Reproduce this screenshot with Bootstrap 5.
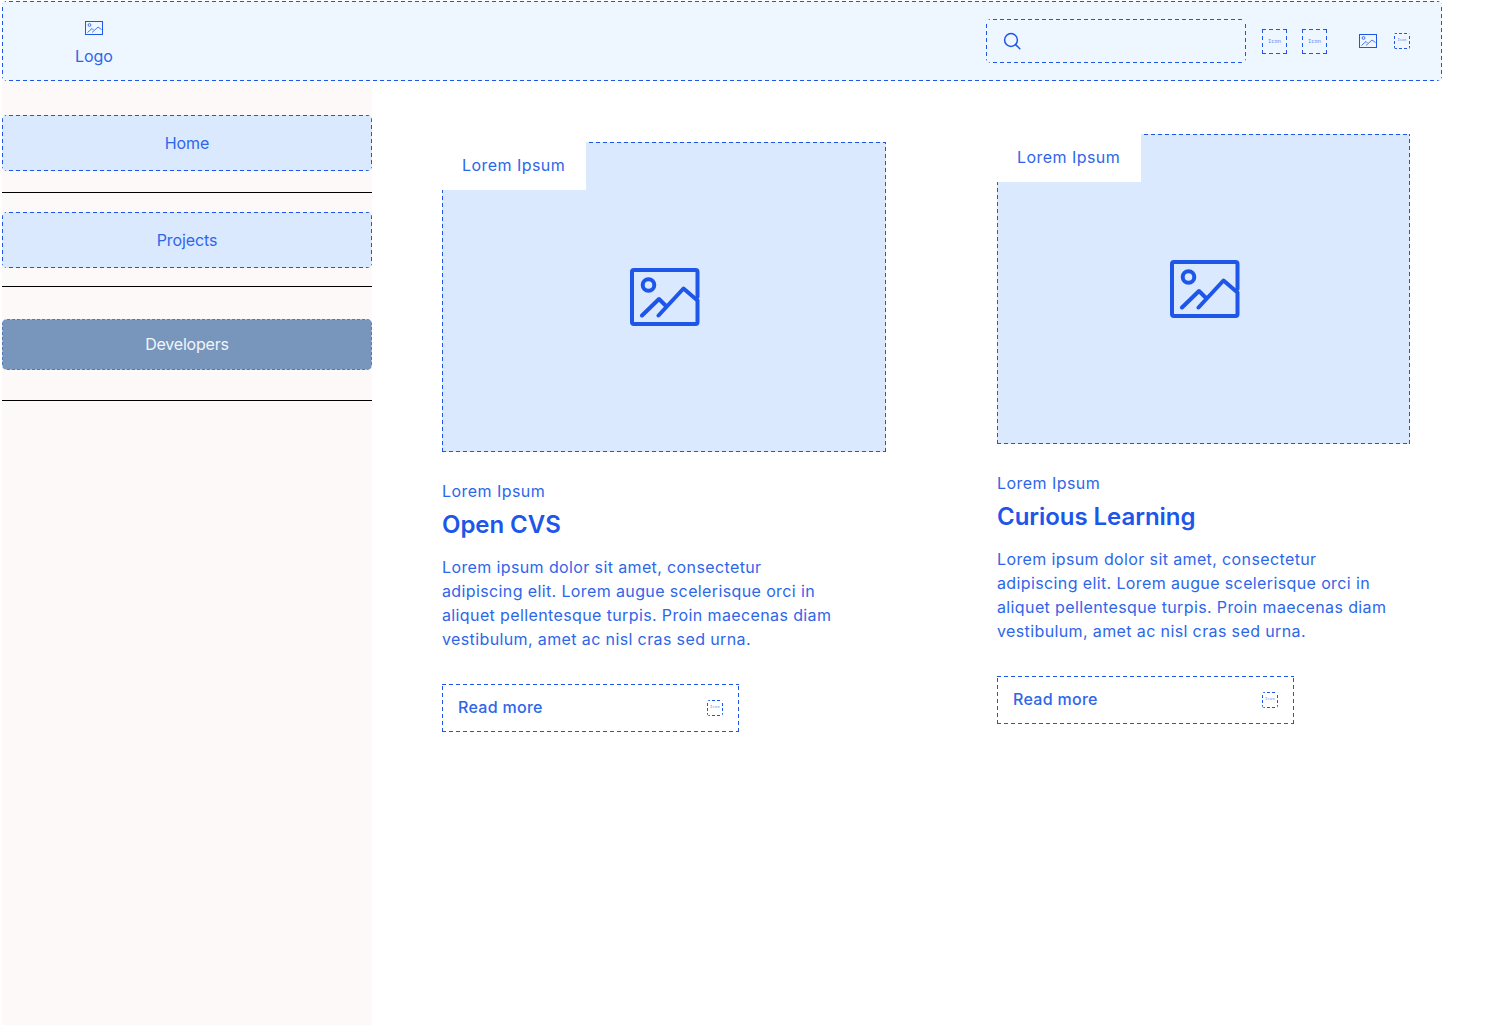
<!doctype html>
<html lang="en"><head><meta charset="utf-8"><title>Wireframe</title>
<link href="https://cdn.jsdelivr.net/npm/bootstrap@5.3.0/dist/css/bootstrap.min.css" rel="stylesheet">
<style>
html,body{background:#fff;height:100%}
body{font-family:"Inter","Liberation Sans",sans-serif;color:#1d56e8;overflow:hidden}
.shell{width:1495px;height:1025px;padding:1px 0 0 2px}
.dash{--dc:#1d56e8;--gap:transparent;--on:4px;--off:7px;
 background-image:
  repeating-linear-gradient(90deg,var(--dc) 0 var(--on),var(--gap) var(--on) var(--off)),
  repeating-linear-gradient(90deg,var(--dc) 0 var(--on),var(--gap) var(--on) var(--off)),
  repeating-linear-gradient(0deg,var(--dc) 0 var(--on),var(--gap) var(--on) var(--off)),
  repeating-linear-gradient(0deg,var(--dc) 0 var(--on),var(--gap) var(--on) var(--off));
 background-size:100% 1px,100% 1px,1px 100%,1px 100%;
 background-position:0 0,0 100%,0 0,100% 0;
 background-repeat:no-repeat}
.topbar{width:1440px;height:80px;background-color:#eef6ff;border-radius:5px;padding-right:32px}
.logo-box{width:184px;font-size:16px;color:#2e66ea;line-height:20px;padding-top:20px;letter-spacing:-.05px}
.logo-box svg{display:block;margin:0 auto 11px}
.search-box{width:260px;height:44px;border-radius:5px;padding-left:17px}
.ic-box{width:25px;height:25px;padding-top:1px;font-size:5.5px;color:#5b8bf0;font-family:"DejaVu Sans Mono",monospace;line-height:1;flex:none}
.ic-small{--on:3px;--off:5px;width:16px;height:16px;font-size:3.7px;color:#5b8bf0;font-family:"DejaVu Sans Mono",monospace;line-height:1;border-radius:2px;flex:none}
.below{height:944px}
.side{width:370px;background:#fdf9f8;flex:none}
.nav-tile{height:56px;background-color:#dbe9fe;border-radius:5px;color:#2e66ea;font-size:16px;letter-spacing:-.1px}
.nav-tile.on{--dc:#4f7cb8;--gap:#aebfd6;--on:3px;--off:5px;height:51px;background-color:#7896bb;color:#f1f5fb;letter-spacing:-.2px;margin-top:32px;padding-bottom:2px}
.rule{height:1px;background:#000}
.m-a{margin-top:34px}.m-b{margin-top:21px}.m-c{margin-top:19px}.m-d{margin-top:18px}.m-f{margin-top:30px}
.mainarea{padding-left:70px}
.tile{flex:none;font-family:"Inter","Liberation Sans",sans-serif}
.tile-a{width:444px;margin-top:61px}
.tile-b{width:413px;margin-top:53px;margin-left:111px}
.thumb{height:310px;background-color:#dbe9fe}
.thumb svg{margin-left:2px}
.tag{top:0;left:0;width:144px;height:48px;background:#fff;font-size:16px;color:#2e66ea;letter-spacing:.45px;padding:0 0 2px 20px}
.eyebrow{margin-top:27px;font-size:16px;line-height:24px;color:#2e66ea;letter-spacing:.45px}
.ttl{margin:6px 0 0;font-size:24px;line-height:32px;font-weight:600;color:#1d56e8;letter-spacing:-.05px}
.copy{margin:14px 0 0;font-size:16px;line-height:24px;color:#2e66ea;width:395px;letter-spacing:.38px}
.more{width:297px;height:48px;margin-top:33px;padding:0 16px;font-size:16px;font-weight:500;color:#2e66ea;letter-spacing:.3px}
.more-txt{margin-bottom:2px}
</style></head>
<body>
<svg width="0" height="0" class="d-block" style="height:0"><defs>
<symbol id="pic" viewBox="0 0 70 58"><g fill="none" stroke="currentColor" stroke-width="4" stroke-linecap="round" stroke-linejoin="round"><path d="M67.5 29V4a2 2 0 0 0-2-2H4a2 2 0 0 0-2 2v50a2 2 0 0 0 2 2h61.5a2 2 0 0 0 2-2V34"/><circle cx="18.5" cy="17" r="5.8"/><path d="M12 47.5 29 31l7.5 7.5M28.5 47.5l25-27 14 12"/></g></symbol>
<symbol id="picthin" viewBox="0 0 18 14"><g fill="none" stroke="currentColor"><rect x=".5" y=".5" width="17" height="13" stroke-width="1"/><circle cx="4.5" cy="4" r="1.4" stroke-width=".8"/><path d="M2.5 11.5 7 7.5l1.6 1.6M7 11.5l6-5.5 3.5 2.5" stroke-width=".8"/></g></symbol>
</defs></svg>
<div class="shell">
<header class="topbar dash d-flex align-items-center">
 <div class="logo-box text-center align-self-start"><svg width="18" height="14" style="color:#1d56e8"><use href="#picthin"/></svg>Logo</div>
 <div class="search-box dash d-flex align-items-center ms-auto"><svg width="18" height="18" viewBox="0 0 18 18" fill="none" stroke="#1d56e8" stroke-width="1.5" stroke-linecap="round"><circle cx="8" cy="8" r="6.4"/><path d="m12.6 12.6 4.2 4.2"/></svg></div>
 <div class="ic-box dash d-flex align-items-center justify-content-center ms-3">Icon</div>
 <div class="ic-box dash d-flex align-items-center justify-content-center" style="margin-left:15px">Icon</div>
 <svg width="18" height="14" style="color:#1d56e8;margin-left:32px;flex:none"><use href="#picthin"/></svg>
 <div class="ic-small dash d-flex align-items-center justify-content-center" style="margin-left:17px">Icon</div>
</header>
<div class="below d-flex">
 <aside class="side">
  <div class="nav-tile dash d-flex align-items-center justify-content-center m-a">Home</div>
  <div class="rule m-b"></div>
  <div class="nav-tile dash d-flex align-items-center justify-content-center m-c">Projects</div>
  <div class="rule m-d"></div>
  <div class="nav-tile dash on d-flex align-items-center justify-content-center">Developers</div>
  <div class="rule m-f"></div>
 </aside>
 <main class="mainarea d-flex align-items-start">
  <article class="tile tile-a">
   <div class="thumb dash position-relative d-flex align-items-center justify-content-center">
    <div class="tag position-absolute d-flex align-items-center">Lorem Ipsum</div>
    <svg width="70" height="58" style="color:#1d56e8"><use href="#pic"/></svg>
   </div>
   <div class="eyebrow">Lorem Ipsum</div>
   <h2 class="ttl">Open CVS</h2>
   <p class="copy">Lorem ipsum dolor sit amet, consectetur adipiscing elit. Lorem augue scelerisque orci in aliquet pellentesque turpis. Proin maecenas diam vestibulum, amet ac nisl cras sed urna.</p>
   <div class="more dash d-flex align-items-center justify-content-between"><span class="more-txt">Read more</span><span class="ic-small dash d-flex align-items-center justify-content-center" style="border-radius:3px">Icon</span></div>
  </article>
  <article class="tile tile-b">
   <div class="thumb dash position-relative d-flex align-items-center justify-content-center">
    <div class="tag position-absolute d-flex align-items-center">Lorem Ipsum</div>
    <svg width="70" height="58" style="color:#1d56e8"><use href="#pic"/></svg>
   </div>
   <div class="eyebrow">Lorem Ipsum</div>
   <h2 class="ttl">Curious Learning</h2>
   <p class="copy">Lorem ipsum dolor sit amet, consectetur adipiscing elit. Lorem augue scelerisque orci in aliquet pellentesque turpis. Proin maecenas diam vestibulum, amet ac nisl cras sed urna.</p>
   <div class="more dash d-flex align-items-center justify-content-between"><span class="more-txt">Read more</span><span class="ic-small dash d-flex align-items-center justify-content-center" style="border-radius:3px">Icon</span></div>
  </article>
 </main>
</div>
</div>
</body></html>
